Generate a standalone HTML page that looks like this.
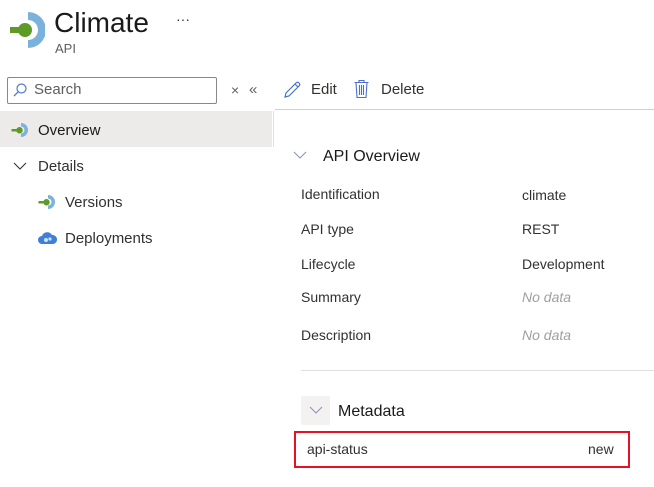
<!DOCTYPE html>
<html><head><style>
body{margin:0;width:654px;height:487px;background:#fff;font-family:"Liberation Sans",sans-serif;color:#323130;position:relative;overflow:hidden}
.a{position:absolute;white-space:nowrap}
.t{font-size:14px;line-height:18px}
.i{color:#a19f9d;font-style:italic}
</style></head><body>
<svg class="a" style="left:9px;top:11px" width="36" height="38" viewBox="0 0 36 38">
<path d="M19 1 A18 18 0 0 1 19 37 L19 29 A10 10 0 0 0 19 9 Z" fill="#7ab2dc"/>
<rect x="1" y="16" width="12" height="6" fill="#5e9a26"/>
<circle cx="16" cy="19" r="7" fill="#5e9a26"/>
</svg>
<div class="a" style="left:54px;top:5px;font-size:28px;line-height:36px;color:#1b1a19">Climate</div>
<div class="a" style="left:55px;top:41px;font-size:13px;color:#605e5c">API</div>
<div class="a" style="left:176px;top:11px;font-size:14px;color:#323130">···</div>
<div class="a" style="left:7px;top:77px;width:208px;height:25px;border:1px solid #8a8886;border-radius:2px"></div>
<svg class="a" style="left:12px;top:82px" width="16" height="16" viewBox="0 0 16 16"><circle cx="9.5" cy="6.5" r="4.5" fill="none" stroke="#4a7bd0" stroke-width="1.2"/><path d="M6.3 9.7 L2 14" stroke="#4a7bd0" stroke-width="1.3"/></svg>
<div class="a t" style="left:34px;top:81px;font-size:15px;color:#605e5c">Search</div>
<div class="a" style="left:231px;top:82px;font-size:14px;color:#605e5c">×</div>
<div class="a" style="left:249px;top:81px;font-size:15px;color:#605e5c">«</div>
<div class="a" style="left:0;top:111px;width:272px;height:36px;background:#edebe9"></div>
<svg class="a" style="left:10px;top:121px" width="20" height="18" viewBox="0 0 36 36"><path d="M20 4 A14 14 0 0 1 20 32 L20 25 A7 7 0 0 0 20 11 Z" fill="#7ab2dc"/><rect x="1" y="16" width="12" height="5" fill="#5e9a26"/><circle cx="17" cy="18.5" r="6.5" fill="#5e9a26"/></svg>
<div class="a t" style="left:38px;top:122px;font-size:15px;color:#1b1a19">Overview</div>
<svg class="a" style="left:13px;top:162px" width="14" height="9" viewBox="0 0 14 9"><path d="M1 1 L7 7 L13 1" fill="none" stroke="#323130" stroke-width="1.1"/></svg>
<div class="a t" style="left:38px;top:158px;font-size:15px">Details</div>
<svg class="a" style="left:37px;top:193px" width="20" height="18" viewBox="0 0 36 36"><path d="M20 4 A14 14 0 0 1 20 32 L20 25 A7 7 0 0 0 20 11 Z" fill="#7ab2dc"/><rect x="1" y="16" width="12" height="5" fill="#5e9a26"/><circle cx="17" cy="18.5" r="6.5" fill="#5e9a26"/></svg>
<div class="a t" style="left:65px;top:194px;font-size:15px">Versions</div>
<svg class="a" style="left:38px;top:231px" width="19" height="14" viewBox="0 0 19 14"><path d="M4 13 A4 4 0 0 1 4 5 A5.5 5.5 0 0 1 14 4 A4.5 4.5 0 0 1 15 13 Z" fill="#3f7fd6"/><circle cx="8" cy="9" r="2" fill="#cfe0f7"/><circle cx="12" cy="8" r="1.6" fill="#cfe0f7"/></svg>
<div class="a t" style="left:65px;top:230px;font-size:15px">Deployments</div>
<div class="a" style="left:273px;top:111px;width:1px;height:36px;background:#e1dfdd"></div>
<svg class="a" style="left:283px;top:80px" width="19" height="19" viewBox="0 0 19 19"><path d="M2 17 L3 13 L13 3 Q14.5 1.5 16 3 Q17.5 4.5 16 6 L6 16 Z M12 4 L15 7" fill="none" stroke="#4a6fd0" stroke-width="1.2"/></svg>
<div class="a t" style="left:311px;top:81px;font-size:15px">Edit</div>
<svg class="a" style="left:353px;top:79px" width="17" height="20" viewBox="0 0 17 20"><path d="M1.5 3.5 H15.5 M6 3.5 V1.5 H11 V3.5 M3 3.5 L4 18.5 H13 L14 3.5 M6.5 6 V16 M8.5 6 V16 M10.5 6 V16" fill="none" stroke="#4a6fd0" stroke-width="1.1"/></svg>
<div class="a t" style="left:381px;top:81px;font-size:15px">Delete</div>
<div class="a" style="left:275px;top:109px;width:379px;height:1px;background:#d2d0ce"></div>
<svg class="a" style="left:293px;top:151px" width="14" height="9" viewBox="0 0 14 9"><path d="M1 1 L7 7 L13 1" fill="none" stroke="#8a8fc0" stroke-width="1"/></svg>
<div class="a" style="left:323px;top:147px;font-size:16px;line-height:20px;color:#1b1a19">API Overview</div>
<div class="a t" style="left:301px;top:185px">Identification</div><div class="a t" style="left:522px;top:186px">climate</div>
<div class="a t" style="left:301px;top:220px">API type</div><div class="a t" style="left:522px;top:220px">REST</div>
<div class="a t" style="left:301px;top:255px">Lifecycle</div><div class="a t" style="left:522px;top:255px">Development</div>
<div class="a t" style="left:301px;top:288px">Summary</div><div class="a t i" style="left:522px;top:288px">No data</div>
<div class="a t" style="left:301px;top:326px">Description</div><div class="a t i" style="left:522px;top:326px">No data</div>
<div class="a" style="left:301px;top:370px;width:353px;height:1px;background:#e1dfdd"></div>
<div class="a" style="left:301px;top:396px;width:29px;height:29px;background:#f3f2f1;border-radius:2px"></div>
<svg class="a" style="left:309px;top:406px" width="14" height="9" viewBox="0 0 14 9"><path d="M1 1 L7 7 L13 1" fill="none" stroke="#8a8fc0" stroke-width="1"/></svg>
<div class="a" style="left:338px;top:402px;font-size:16px;line-height:20px;color:#1b1a19">Metadata</div>
<div class="a" style="left:294px;top:431px;width:332px;height:33px;border:2px solid #e81123"></div>
<div class="a t" style="left:307px;top:440px">api-status</div>
<div class="a t" style="left:588px;top:440px">new</div>
</body></html>
